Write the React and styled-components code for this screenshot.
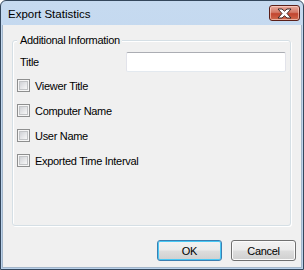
import React from "react";
import styled, { createGlobalStyle } from "styled-components";

const Global = createGlobalStyle`
  html, body { margin: 0; padding: 0; background: #fff; }
  body { font-family: "Liberation Sans", Arial, sans-serif; }
`;

const Window = styled.div`
  width: 304px;
  height: 270px;
  box-sizing: border-box;
  border: 1px solid #34475c;
  border-radius: 6px 6px 0 0;
  background: linear-gradient(#c6daf0, #b9d1ea);
  padding: 0 1px 1px 1px;
  display: flex;
  flex-direction: column;
  overflow: hidden;
`;

const TitleBar = styled.div`
  height: 24px;
  flex: none;
  display: flex;
  align-items: flex-start;
  padding: 4px 2px 0 6px;
  box-sizing: border-box;
`;

const TitleText = styled.div`
  flex: 1;
  font-size: 11.5px;
  line-height: 18px;
  color: #000;
`;

const CloseButton = styled.div`
  width: 31px;
  height: 16px;
  box-sizing: border-box;
  border: 1px solid #5a1f18;
  border-radius: 3px;
  background: linear-gradient(#e9a99c 0%, #d47a68 45%, #c2452f 55%, #cf6a4e 100%);
  box-shadow: inset 0 0 0 1px rgba(255, 220, 210, 0.6);
  display: flex;
  align-items: center;
  justify-content: center;
`;

const Client = styled.div`
  flex: 1;
  background: #f0f0f0;
  border: 1px solid #a3b6ca;
  border-top: none;
  padding: 8px 5px 6px 9px;
  display: flex;
  flex-direction: column;
  min-height: 0;
  font-size: 11px;
  letter-spacing: -0.3px;
  color: #000;
`;

const GroupBox = styled.fieldset`
  margin: 0 5px 0 0;
  height: 193px;
  box-sizing: border-box;
  border: 1px solid #d5dfe5;
  border-radius: 3px;
  box-shadow: inset 1px 1px 0 #fff, 1px 1px 0 #fff;
  padding: 5px 4px 0 4px;
  min-width: 0;
  display: flex;
  flex-direction: column;
`;

const Legend = styled.legend`
  padding: 0 2px 0 3px;
  line-height: 14px;
  background: #f0f0f0;
`;

const FieldRow = styled.div`
  display: flex;
  align-items: center;
  height: 20px;
  padding-left: 3px;
`;

const TextBox = styled.input`
  margin-left: auto;
  width: 160px;
  height: 20px;
  box-sizing: border-box;
  border: 1px solid #e2e3ea;
  border-top-color: #abadb3;
  border-bottom-color: #e3e9ef;
  border-radius: 2px;
  background: #fff;
  padding: 0 3px;
  font: inherit;
  outline: none;
`;

const CheckList = styled.div`
  display: flex;
  flex-direction: column;
  gap: 12px;
  margin-top: 7px;
`;

const CheckRow = styled.label`
  display: flex;
  align-items: center;
  height: 13px;
  gap: 5px;
`;

const CheckBox = styled.span`
  width: 13px;
  height: 13px;
  box-sizing: border-box;
  border: 1px solid #8e8f8f;
  background: #f6f6f6;
  padding: 1px;
  flex: none;
  display: flex;
  &::after {
    content: "";
    flex: 1;
    border: 1px solid #c2c4c6;
    background: linear-gradient(135deg, #d0d2d6, #f8f8f8);
  }
`;

const ButtonRow = styled.div`
  margin-top: auto;
  display: flex;
  justify-content: flex-end;
  gap: 9px;
`;

const Button = styled.button`
  width: 65px;
  height: 21px;
  box-sizing: border-box;
  border: 1px solid ${(p) => (p.$default ? "#3c7fb1" : "#707070")};
  border-radius: 3px;
  background: linear-gradient(#f2f2f2 0%, #ebebeb 48%, #dddddd 52%, #cfcfcf 100%);
  box-shadow: inset 0 0 0 1px ${(p) => (p.$default ? "#48c8f5" : "#fbfbfb")};
  font-family: "Liberation Sans", Arial, sans-serif;
  font-size: 11px;
  letter-spacing: -0.3px;
  color: #000;
  padding: 0;
`;

const CloseIcon = () => (
  <svg width="15" height="11" viewBox="0 0 15 11">
    <path
      d="M1 1h4l2.5 2.2L10 1h4l-4 4.5 4 4.5h-4l-2.5-2.2L5 10H1l4-4.5z"
      fill="#fff"
      stroke="#3d2a28"
      strokeWidth="1"
      strokeLinejoin="round"
    />
  </svg>
);

const options = ["Viewer Title", "Computer Name", "User Name", "Exported Time Interval"];

export default function App() {
  return (
    <>
      <Global />
      <Window>
        <TitleBar>
          <TitleText>Export Statistics</TitleText>
          <CloseButton>
            <CloseIcon />
          </CloseButton>
        </TitleBar>
        <Client>
          <GroupBox>
            <Legend>Additional Information</Legend>
            <FieldRow>
              <span>Title</span>
              <TextBox type="text" />
            </FieldRow>
            <CheckList>
              {options.map((o) => (
                <CheckRow key={o}>
                  <CheckBox />
                  {o}
                </CheckRow>
              ))}
            </CheckList>
          </GroupBox>
          <ButtonRow>
            <Button $default>OK</Button>
            <Button>Cancel</Button>
          </ButtonRow>
        </Client>
      </Window>
    </>
  );
}
